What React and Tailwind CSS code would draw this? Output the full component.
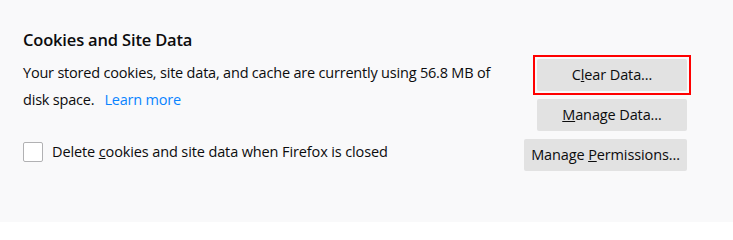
export default function App() {
  return (
    <div
      className="h-[222px] w-[733px] bg-[#f9f9fa] pl-[23px] pr-[46px] pt-[28px] text-[#0c0c0d]"
      style={{ fontFamily: '"Open Sans", "Noto Sans", sans-serif' }}
    >
      <h2 className="text-[16.5px] font-semibold leading-[24px] tracking-[-0.17px]">Cookies and Site Data</h2>
      <div className="mt-[7px] flex justify-between">
        <div className="text-[14.5px] tracking-[-0.12px]">
          <p className="whitespace-nowrap leading-[27px] tracking-[-0.2px]">
            Your stored cookies, site data, and cache are currently using 56.8 MB of
            <br />
            disk space.
            <a href="#" className="ml-[10px] text-[#0a84ff]">Learn more</a>
          </p>
          <label className="mt-[29px] flex items-center gap-[9px] whitespace-nowrap leading-[20px]">
            <span className="h-[20px] w-[20px] rounded-[2px] border border-[#b1b1b3] bg-white" />
            <span>
              Delete <u>c</u>ookies and site data when Firefox is closed
            </span>
          </label>
        </div>
        <div className="flex flex-col items-end gap-2 whitespace-nowrap text-[14.5px] tracking-[-0.12px]">
          <div className="-m-[4px] border-2 border-[#ff0000] p-[2px]">
            <button className="block h-8 w-[150px] rounded-[2px] bg-[#e2e2e2]">
              C<u>l</u>ear Data…
            </button>
          </div>
          <button className="h-8 w-[150px] rounded-[2px] bg-[#e2e2e2]">
            <u>M</u>anage Data…
          </button>
          <button className="h-8 w-[163px] rounded-[2px] bg-[#e2e2e2]">
            Manage <u>P</u>ermissions…
          </button>
        </div>
      </div>
    </div>
  );
}
